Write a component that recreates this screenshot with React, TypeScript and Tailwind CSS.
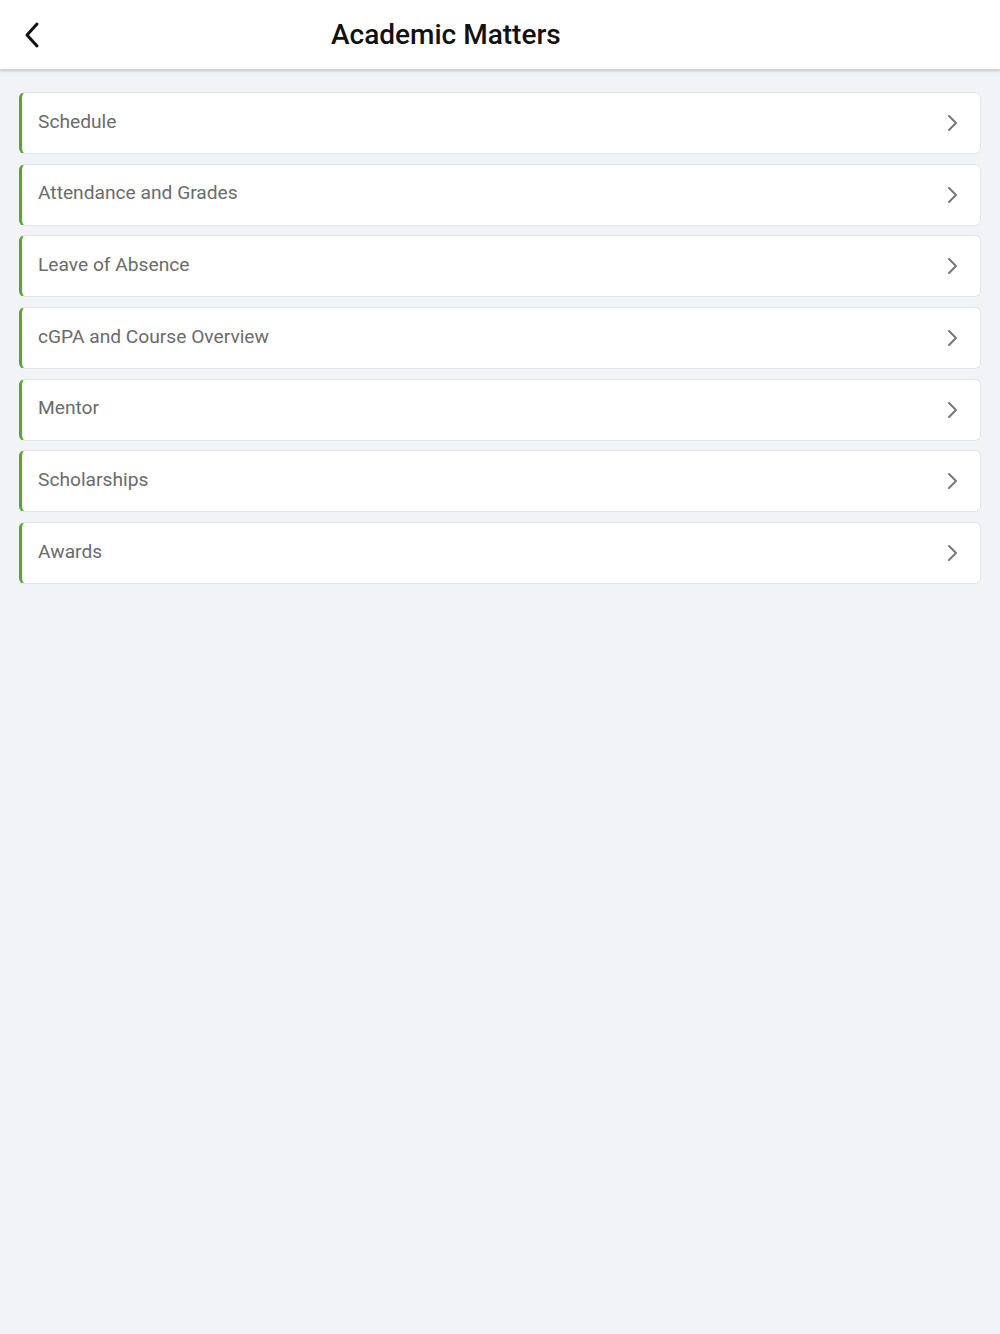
const items = [
  "Schedule",
  "Attendance and Grades",
  "Leave of Absence",
  "cGPA and Course Overview",
  "Mentor",
  "Scholarships",
  "Awards",
];

export default function App() {
  return (
    <div className="min-h-[1334px] w-full bg-[#f2f3f7] font-['Roboto',sans-serif]">
      <header className="flex h-[69px] items-center bg-white shadow-[0_2px_3px_rgba(0,0,0,0.18)]">
        <button className="ml-[20px] flex h-[30px] w-[24px] items-center justify-center text-[#111]">
          <svg width="20" height="28" viewBox="0 0 20 28" fill="none">
            <path d="M15 3 L5 14 L15 25" stroke="currentColor" strokeWidth="3" strokeLinecap="round" strokeLinejoin="round" />
          </svg>
        </button>
        <h1 className="ml-[287px] pt-[1px] text-[28px] font-medium text-[#111]">
          Academic Matters
        </h1>
      </header>
      <div className="flex flex-col gap-[9.67px] px-[19px] pt-[23px]">
        {items.map((label) => (
          <div
            key={label}
            className="flex h-[62px] items-center rounded-[6px] border border-[#e3e4e8] border-l-[3px] border-l-[#56a82a] bg-white pl-[16px] pr-[21px]"
          >
            <span className="flex-1 pb-[2px] text-[19.2px] text-[#6b6b6b]">{label}</span>
            <svg width="13" height="18" viewBox="0 0 13 18" fill="none">
              <path d="M3 2 L10 9 L3 16" stroke="#777" strokeWidth="2" strokeLinecap="round" strokeLinejoin="round" />
            </svg>
          </div>
        ))}
      </div>
    </div>
  );
}
